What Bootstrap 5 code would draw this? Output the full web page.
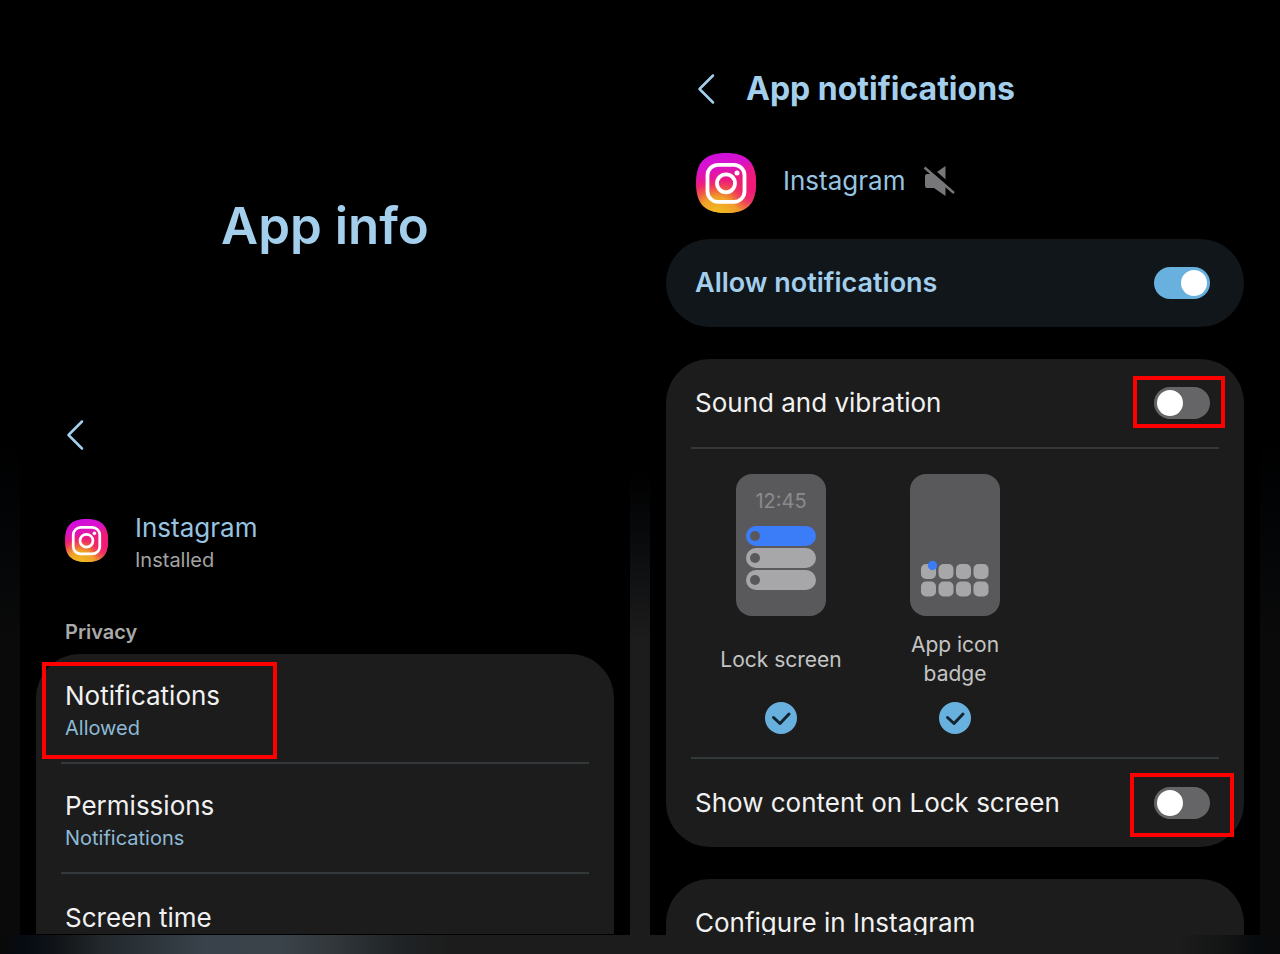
<!DOCTYPE html>
<html lang="en">
<head>
<meta charset="utf-8">
<meta name="viewport" content="width=device-width, initial-scale=1">
<title>App notifications</title>
<link href="https://cdn.jsdelivr.net/npm/bootstrap@5.3.0/dist/css/bootstrap.min.css" rel="stylesheet">
<style>
  :root { --sky: #a3cfec; --sky-dim: #8db9d6; --accent: #68b0de; --panel: #1c1c1c; --rule: #33383b; }
  body { background: #000; color: #f1f1f1; font-family: Inter, "Noto Sans", sans-serif; font-size: 26px; line-height: 36px; }
  a, a:hover { color: inherit; text-decoration: none; }
  .stage { padding: 0 20px; gap: 20px;
    background:
      linear-gradient(#000 0, #000 440px, #020406 520px, #0a0a0a 640px) left / 20px 100% no-repeat,
      linear-gradient(#000 0, #000 440px, #020406 520px, #0a0a0a 640px) right / 20px 100% no-repeat,
      linear-gradient(#000 0, #000 470px, #0a0c0e 550px, #1c1c1c 640px) center / 20px 100% no-repeat; }
  .phone { flex: 1 1 0; min-width: 0; padding: 0 16px; background: #000; }
  .glow { height: 20px; background: linear-gradient(90deg, #090909 0, #050b12 2%, #14171a 5%, #22282c 8%, #39424a 16%, #3a434a 22%, #31373b 26%, #202427 31%, #1c1c1c 35%, #1c1c1c 92%, #121313 96%, #070b0f 98%, #0a0a0a 100%); }
  .inset { padding-left: 29px; padding-right: 29px; }
  .inset-right { padding-left: 30px; padding-right: 30px; }
  .back { display: block; width: 20px; height: 32px; padding: 0; border: 0; background: none; color: var(--sky); }
  .back svg { display: block; }
  .big-title { padding-top: 194px; font-size: 51px; line-height: 64px; font-weight: 600; color: var(--sky); margin: 0 0 161px; }
  .top-title { font-size: 32px; line-height: 44px; font-weight: 700; color: var(--sky); margin: 0; }
  .topbar { padding-top: 67px; gap: 30px; }
  .sky { color: #97c4e0; }
  .sub { display: block; font-size: 20px; line-height: 28px; }
  .sub-sky { color: var(--sky-dim); }
  .sub-gray { color: #a3a3a3; }
  .app-left { margin-top: 59px; gap: 27px; }
  .app-right { margin-top: 42px; gap: 27px; }
  .app-name { gap: 18px; }
  .section-title { margin: 44px 0 8px; font-size: 20px; line-height: 28px; font-weight: 600; color: #a9a9a9; }
  .panel { background: var(--panel); border-radius: 44px; padding: 0 25px; }
  .panel-next { margin-top: 32px; }
  .panel-open { border-radius: 44px 44px 0 0; }
  .panel-allow { margin-top: 26px; background: #10161a; color: var(--sky); font-size: 27px; font-weight: 600; }
  .item { display: block; position: relative; padding: 24px 4px 20px; border-bottom: 2px solid var(--rule); }
  .item-cut { padding: 26px 4px 0; border: 0; overflow: hidden; }
  .cut-left { height: 60px; }
  .cut-right { height: 56px; }
  .line { padding: 0 9px 0 4px; height: 88px; }
  .line-rule { height: 90px; border-bottom: 2px solid var(--rule); }
  .toggle-wrap { position: relative; display: flex; }
  .form-check-input.toggle { width: 56px; height: 32px; margin: 0; border: 0; border-radius: 16px; background: #656567; position: relative; box-shadow: none; cursor: pointer; }
  .toggle::before { content: ""; position: absolute; left: 3px; top: 3px; width: 26px; height: 26px; border-radius: 50%; background: #fff; }
  .form-check-input.toggle:checked { background: var(--accent); }
  .toggle:checked::before { left: 27px; }
  .marker { position: absolute; border: 4px solid #f00; pointer-events: none; }
  .marker-item { left: -19px; top: 8px; width: 235px; height: 97px; }
  .marker-sound { inset: -11px -15px -9px -21px; }
  .marker-lock { inset: -14px -24px -18px -24px; }
  .views { padding: 25px 0 23px 3px; border-bottom: 2px solid var(--rule); }
  .view { width: 174px; font-size: 21px; line-height: 29px; color: #c4c4c4; cursor: pointer; }
  .view-name { height: 58px; margin: 14px 0; }
  .form-check-input.tick { width: 32px; height: 32px; margin: 0; border: 0; border-radius: 50%; background: #555; display: block; box-shadow: none; }
  .form-check-input.tick:checked { background: var(--accent) url("data:image/svg+xml,%3Csvg xmlns='http://www.w3.org/2000/svg' viewBox='0 0 32 32'%3E%3Cpath d='M8.5 15.5l6.5 6 9-9.5' fill='none' stroke='%2314232d' stroke-width='3' stroke-linecap='round' stroke-linejoin='round'/%3E%3C/svg%3E") center / 32px no-repeat; }
</style>
</head>
<body>
<svg width="0" height="0" class="position-absolute" aria-hidden="true">
  <defs>
    <linearGradient id="ig-base" x1=".35" y1="0" x2=".55" y2="1">
      <stop offset="0" stop-color="#cf0ee0"/><stop offset=".22" stop-color="#d912c8"/><stop offset=".48" stop-color="#ee1b7c"/><stop offset=".68" stop-color="#f0404e"/><stop offset=".84" stop-color="#f08a2c"/><stop offset="1" stop-color="#efb822"/>
    </linearGradient>
    <radialGradient id="ig-warm" cx=".35" cy="1.05" r=".62">
      <stop offset="0" stop-color="#f2c01f"/><stop offset=".5" stop-color="#f0a128"/><stop offset="1" stop-color="#f0503a" stop-opacity="0"/>
    </radialGradient>
    <radialGradient id="ig-pink" cx="1" cy=".6" r=".45">
      <stop offset="0" stop-color="#f2147c"/><stop offset=".5" stop-color="#f01a78" stop-opacity=".8"/><stop offset="1" stop-color="#ee1b7c" stop-opacity="0"/>
    </radialGradient>
    <symbol id="ig" viewBox="0 0 60 60">
      <path d="M30 0C51 0 60 9 60 30S51 60 30 60 0 51 0 30 9 0 30 0z" fill="url(#ig-base)"/>
      <path d="M30 0C51 0 60 9 60 30S51 60 30 60 0 51 0 30 9 0 30 0z" fill="url(#ig-warm)"/>
      <path d="M30 0C51 0 60 9 60 30S51 60 30 60 0 51 0 30 9 0 30 0z" fill="url(#ig-pink)"/>
      <g fill="none" stroke="#fff" stroke-width="3.8"><rect x="11.5" y="11.8" width="37" height="37" rx="10.5"/><circle cx="30" cy="30.3" r="9"/></g>
      <circle cx="41" cy="20" r="2.5" fill="#fff"/>
    </symbol>
    <symbol id="chevron" viewBox="0 0 20 32"><path d="M17 2.500L3.500 16 17 29.500" fill="none" stroke="currentColor" stroke-width="2.500" stroke-linecap="round" stroke-linejoin="round"/></symbol>
  </defs>
</svg>

<main class="stage d-flex">
  <section class="phone" aria-label="App info">
    <h1 class="big-title text-center">App info</h1>
    <div class="inset">
      <button class="back" type="button" aria-label="Back"><svg width="20" height="32"><use href="#chevron"/></svg></button>
      <div class="app-left d-flex align-items-center">
        <div class="d-flex pb-1"><svg width="43" height="43" role="img" aria-label="Instagram logo"><use href="#ig"/></svg></div>
        <div><span class="sky">Instagram</span><span class="sub sub-gray">Installed</span></div>
      </div>
      <h2 class="section-title">Privacy</h2>
    </div>
    <nav class="panel panel-open">
      <a class="item" href="#notifications">Notifications<span class="sub sub-sky">Allowed</span><span class="marker marker-item"></span></a>
      <a class="item" href="#permissions">Permissions<span class="sub sub-sky">Notifications</span></a>
      <a class="item item-cut cut-left" href="#screen-time">Screen time</a>
    </nav>
  </section>

  <section class="phone" id="notifications" aria-label="App notifications">
    <header class="topbar inset-right d-flex align-items-center">
      <button class="back" type="button" aria-label="Back"><svg width="20" height="32"><use href="#chevron"/></svg></button>
      <h2 class="top-title">App notifications</h2>
    </header>
    <div class="app-right inset-right d-flex align-items-center">
      <svg width="60" height="60" role="img" aria-label="Instagram logo"><use href="#ig"/></svg>
      <div class="app-name d-flex align-items-center pb-1 sky">Instagram
        <svg width="32" height="32" viewBox="0 0 32 32" role="img" aria-label="Muted">
          <path d="M4 9h7L22.500 1v30L11 23H4q-2 0-2-2V11q0-2 2-2z" fill="#77777a"/>
          <path d="M3 0L32.500 25.500" stroke="#000" stroke-width="4"/>
          <path d="M1.500 2.500L31 28" stroke="#77777a" stroke-width="2.400"/>
        </svg>
      </div>
    </div>
    <div class="panel panel-allow">
      <div class="line d-flex align-items-center justify-content-between">
        <label for="allow">Allow notifications</label>
        <span class="toggle-wrap"><input class="form-check-input toggle" type="checkbox" role="switch" id="allow" checked></span>
      </div>
    </div>
    <div class="panel panel-next">
      <div class="line line-rule d-flex align-items-center justify-content-between">
        <label for="sound">Sound and vibration</label>
        <span class="toggle-wrap"><input class="form-check-input toggle" type="checkbox" role="switch" id="sound"><span class="marker marker-sound"></span></span>
      </div>
      <div class="views d-flex">
        <label class="view d-flex flex-column align-items-center text-center" for="lock-view">
          <svg width="90" height="142" viewBox="0 0 90 142" aria-hidden="true">
            <rect width="90" height="142" rx="16" fill="#59595b"/>
            <text x="45" y="34" text-anchor="middle" font-size="20" fill="#8b8b8d">12:45</text>
            <rect x="10" y="52" width="70" height="20" rx="10" fill="#3b7cf8"/>
            <rect x="10" y="74" width="70" height="20" rx="10" fill="#a7a7a9"/>
            <rect x="10" y="96" width="70" height="20" rx="10" fill="#a7a7a9"/>
            <g fill="#59595b"><circle cx="19" cy="62" r="5"/><circle cx="19" cy="84" r="5"/><circle cx="19" cy="106" r="5"/></g>
          </svg>
          <span class="view-name d-flex align-items-center">Lock screen</span>
          <input class="form-check-input tick" type="checkbox" id="lock-view" checked>
        </label>
        <label class="view d-flex flex-column align-items-center text-center" for="badge-view">
          <svg width="90" height="142" viewBox="0 0 90 142" aria-hidden="true">
            <rect width="90" height="142" rx="16" fill="#59595b"/>
            <g fill="#a7a7a9">
              <rect x="11" y="90" width="15" height="15" rx="5"/><rect x="28.500" y="90" width="15" height="15" rx="5"/><rect x="46" y="90" width="15" height="15" rx="5"/><rect x="63.500" y="90" width="15" height="15" rx="5"/>
              <rect x="11" y="107.500" width="15" height="15" rx="5"/><rect x="28.500" y="107.500" width="15" height="15" rx="5"/><rect x="46" y="107.500" width="15" height="15" rx="5"/><rect x="63.500" y="107.500" width="15" height="15" rx="5"/>
            </g>
            <circle cx="22.500" cy="91.500" r="4.700" fill="#3b7cf8"/>
          </svg>
          <span class="view-name">App icon<br>badge</span>
          <input class="form-check-input tick" type="checkbox" id="badge-view" checked>
        </label>
      </div>
      <div class="line d-flex align-items-center justify-content-between">
        <label for="show">Show content on Lock screen</label>
        <span class="toggle-wrap"><input class="form-check-input toggle" type="checkbox" role="switch" id="show"><span class="marker marker-lock"></span></span>
      </div>
    </div>
    <div class="panel panel-next panel-open">
      <a class="item item-cut cut-right" href="#configure">Configure in Instagram</a>
    </div>
  </section>
</main>
<div class="glow"></div>
<script src="https://cdn.jsdelivr.net/npm/bootstrap@5.3.0/dist/js/bootstrap.bundle.min.js"></script>
</body>
</html>
